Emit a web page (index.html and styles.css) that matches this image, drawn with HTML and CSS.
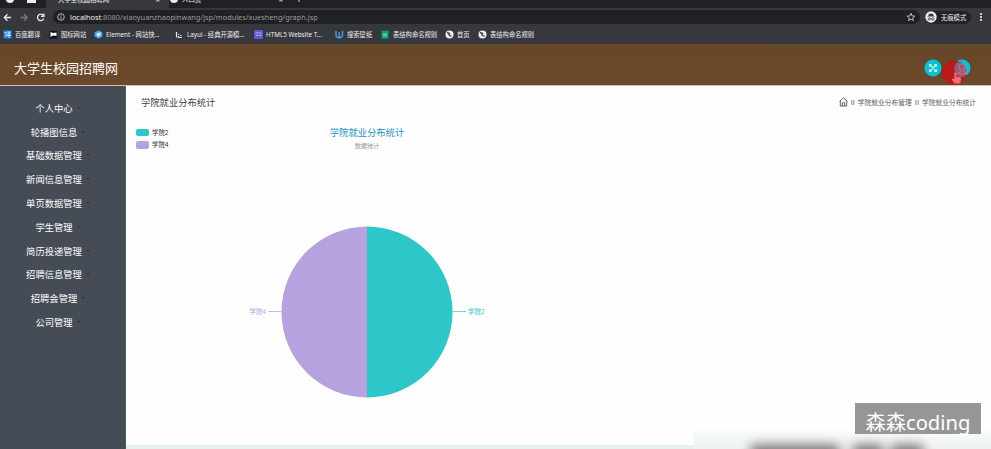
FILE: index.html
```html
<!DOCTYPE html>
<html lang="zh-CN">
<head>
<meta charset="utf-8">
<title>大学生校园招聘网</title>
<link rel="stylesheet" href="styles.css">
</head>
<body>
<div class="browser">
  <div class="tabs">
    <div class="pins"><i class="dot"></i><i class="card"></i></div>
    <div class="tab active"><span>大学生校园招聘网</span><b>×</b></div>
    <div class="tab"><i class="dot"></i><span>人口页</span><b>×</b></div>
    <div class="plus">+</div>
    <div class="win"><i>−</i><i>▫</i><i>×</i></div>
  </div>
  <div class="bar">
    <svg class="nav" viewBox="0 0 50 17" fill="none" stroke="#e8e8ea" stroke-width="1.3"><path d="M11 8.500H4.500M7.500 5.300L4.300 8.500L7.500 11.700"/><path stroke="#77787c" d="M20.500 8.500H27M24 5.300L27.200 8.500L24 11.700"/><path d="M43.300 6.500A3.200 3.200 0 1 0 43.700 9.500M43.900 4.500V7.300H41"/></svg>
    <div class="address">
      <svg class="info" viewBox="0 0 8 8" fill="none" stroke="#ddd" stroke-width=".8"><circle cx="4" cy="4" r="3.300"/><path d="M4 3.500V6M4 2V2.800"/></svg>
      <span class="url"><em>localhost</em>:8080/xiaoyuanzhaopinwang/jsp/modules/xuesheng/graph.jsp</span>
      <svg class="star" viewBox="0 0 10 10" fill="none" stroke="#ccc" stroke-width=".9"><path d="M5 1.300L6.100 3.900L8.800 4.100L6.700 5.900L7.400 8.600L5 7.100L2.600 8.600L3.300 5.900L1.200 4.100L3.900 3.900Z"/></svg>
    </div>
    <div class="private">
      <svg viewBox="0 0 12 12"><circle cx="6" cy="6" r="5.700" fill="#f1f1f2"/><path d="M4 2.800H8L8.700 5H3.300ZM2.300 5.400H9.700V6H2.300Z" fill="#333"/><g fill="none" stroke="#333" stroke-width=".8"><circle cx="4.200" cy="8" r="1.200"/><circle cx="7.800" cy="8" r="1.200"/><path d="M5.400 7.800H6.600"/></g></svg>
      <span>无痕模式</span>
    </div>
    <div class="more"><i></i><i></i><i></i></div>
  </div>
  <div class="bookmarks">
    <div><svg viewBox="0 0 9 9"><rect x=".5" y=".5" width="8" height="8" fill="#1687e8"/><path d="M1.500 2.500H3V7M4 2H7.500L4 4.500M5 3L7.500 4.500M4 5.500H8M6 4V8" fill="none" stroke="#fff" stroke-width=".7"/></svg><span>百度翻译</span></div>
    <div><svg viewBox="0 0 9 9"><rect x=".5" y="1" width="7.500" height="7.500" fill="#111"/><path d="M1.500 2L4 3L7.500 2.500V6L4 5.500L1.500 7Z" fill="#fff"/></svg><span>图标网站</span></div>
    <div><svg viewBox="0 0 9 9"><path d="M4.500 .3L8.400 2.500V6.500L4.500 8.700L.6 6.500V2.500Z" fill="#42aaf4"/><path d="M6.500 2.700L3 4V5L6.500 4M6.500 5L3 6.300" fill="none" stroke="#fff" stroke-width=".9"/></svg><span>Element - 网站快...</span></div>
    <div><svg viewBox="0 0 9 9" fill="none" stroke="#e8e8ea" stroke-width="1.200"><path d="M1.500 2V7.500M3.500 4V5M3.500 6V7.500H7M5 5.500H6.500"/></svg><span>Layui - 经典开源模...</span></div>
    <div><svg viewBox="0 0 9 9"><rect width="9" height="9" rx="1" fill="#5d59d5"/><path d="M1.500 3H7.500M2 5.500H4M5 5.500H7.500" stroke="#b7b5ff" fill="none"/></svg><span>HTML5 Website T...</span></div>
    <div><svg viewBox="0 0 9 9" fill="none" stroke-width="1.300"><path stroke="#4ba3e8" d="M1 1V6L2.500 7.500H6L7.500 6V1M4.200 2V7"/></svg><span>搜索壁纸</span></div>
    <div><svg viewBox="0 0 9 9"><rect x=".5" y=".8" width="7" height="8" rx=".5" fill="#05a66b"/><path d="M2 4H6M2 5.800H6" stroke="#8fe0bc"/></svg><span>表结构命名规则</span></div>
    <div><svg viewBox="0 0 9 9"><circle cx="4.500" cy="4.500" r="4" fill="#eee"/><path d="M2 2.500L4.500 3.500L4 5L6.500 6.500" fill="none" stroke="#414249" stroke-width="1.400"/></svg><span>首页</span></div>
    <div><svg viewBox="0 0 9 9"><circle cx="4.500" cy="4.500" r="4" fill="#eee"/><path d="M2 2.500L4.500 3.500L4 5L6.500 6.500" fill="none" stroke="#414249" stroke-width="1.400"/></svg><span>表结构命名规则</span></div>
  </div>
</div>
<header class="header">
  <h1>大学生校园招聘网</h1>
  <div class="actions">
    <svg class="round" viewBox="0 0 18 18"><circle cx="9" cy="9" r="8.500" fill="#05c2db"/><path d="M6 6L12 12M12 6L6 12M5.500 7.500V5.500H7.500M10.500 5.500H12.500V7.500M12.500 10.500V12.500H10.500M7.500 12.500H5.500V10.500" fill="none" stroke="#e7ffff" stroke-width="1.100"/></svg>
    <div class="user">
      <svg class="round" viewBox="0 0 18 18"><circle cx="9" cy="9" r="8.500" fill="#05c2db"/></svg>
      <svg class="pointer" viewBox="0 0 30 30"><circle cx="13" cy="13.500" r="12" fill="#b91917"/><path d="M17.700 2.500A8.500 8.500 0 0 0 17.700 17.500Q21 19 24.300 17A12 12 0 0 0 17.700 2.500Z" fill="#85607f"/><path d="M19.500 11C16.800 8 18 5 21 5S25.200 8 22.500 11M19.500 11V12L17 14.800H25.500L22.500 12V11" fill="none" stroke="#f85766" stroke-width="1.100"/><path d="M13.300 14Q14.200 12.700 15.200 14V17.500L19 18.200Q20.200 18.500 20 20L19.200 24.500H13.500L10.800 20.500Q10.600 18.800 13.300 20Z" fill="#ff6a6a"/></svg>
    </div>
  </div>
</header>
<div class="layout">
  <nav class="side">
    <a>个人中心</a><a>轮播图信息</a><a>基础数据管理</a><a>新闻信息管理</a><a>单页数据管理</a><a>学生管理</a><a>简历投递管理</a><a>招聘信息管理</a><a>招聘会管理</a><a>公司管理</a>
  </nav>
  <main class="main">
    <div class="heading">
      <h2>学院就业分布统计</h2>
      <div class="crumbs"><svg viewBox="0 0 9 10" fill="none" stroke="#555" stroke-width=".9"><path d="M.6 4.300L4.500 .8L8.400 4.300M1.300 3.800V9H7.700V3.800M3.300 9V5.700H5.700V9"/></svg><i>II</i><span>学院就业分布管理</span><i>II</i><span>学院就业分布统计</span></div>
    </div>
    <div class="chart">
      <div class="legend"><div><i class="teal"></i>学院2</div><div><i class="purple"></i>学院4</div></div>
      <div class="plot">
        <h3>学院就业分布统计</h3>
        <p>数据统计</p>
        <div class="pie-row">
          <span class="label-purple">学院4</span>
          <svg class="pie" viewBox="0 0 200 172"><path d="M100 .5A85.500 85.500 0 0 0 100 171.500Z" fill="#b6a2de"/><path d="M100 .5A85.500 85.500 0 0 1 100 171.500Z" fill="#2ec7c9"/><path d="M1 85.500H14.500" stroke="#cbbce8"/><path d="M185.500 85.500H199" stroke="#72d7d8"/></svg>
          <span class="label-teal">学院2</span>
        </div>
      </div>
    </div>
    <div class="foot"></div>
  </main>
</div>
<div class="haze"><i></i><i></i><i></i></div>
<div class="watermark">森森coding</div>
</body>
</html>
```
FILE: styles.css
```css
* { box-sizing: border-box; }
body { margin: 0; width: 991px; height: 449px; overflow: hidden; position: relative; background: #fff; font-family: "Noto Sans", "Noto Sans CJK SC", sans-serif; color: #444; }
i, em { font-style: normal; }
h1, h2, h3, p { margin: 0; font-weight: 400; }
svg { display: block; flex: none; }
.browser { height: 44px; background: #37383e; color: #eee; }
.tabs { height: 8px; background: #202124; display: flex; overflow: hidden; font-size: 6.4px; line-height: 8px; }
.pins { width: 46px; display: flex; gap: 13px; padding-left: 6px; }
.dot { width: 8px; height: 8px; margin-top: -5px; border-radius: 50%; background: #eee; flex: none; }
.card { width: 9px; height: 3px; background: #eee; }
.tab { width: 123px; display: flex; padding-left: 1px; }
.tab span { margin-top: -4px; }
.tab.active { background: #37383e; padding-left: 12px; }
.tab b { margin: -4px 9px 0 auto; font-weight: 400; font-size: 8px; }
.tab .dot { margin-right: 4px; }
.plus { font-size: 10px; margin: -5px 0 0 4px; }
.win { margin: -5px 4px 0 auto; display: flex; gap: 18px; }
.bar { height: 18px; display: flex; align-items: center; }
.nav { width: 50px; height: 17px; }
.address { width: 867px; height: 14px; margin-left: 3px; border-radius: 7px; background: #202125; display: flex; align-items: center; padding: 0 4px; }
.info { width: 8px; height: 8px; margin-right: 5px; }
.url { font-size: 7.37px; line-height: 12px; color: #999a9e; white-space: nowrap; }
.url em { color: #f3f3f4; }
.star { width: 10px; height: 10px; margin-left: auto; }
.private { width: 46px; height: 13px; margin-left: 5px; border-radius: 7px; background: #222327; display: flex; align-items: center; gap: 4px; font-size: 6.3px; white-space: nowrap; }
.private svg { width: 12px; height: 12px; }
.more { display: flex; flex-direction: column; gap: 1.5px; margin-left: 9px; }
.more i { width: 1.5px; height: 1.5px; background: #ccc; }
.bookmarks { height: 17px; display: grid; grid-template-columns: 46px 45px 81px 79px 81px 46px 64px 33px 60px; padding-left: 3px; font-size: 6.3px; align-items: center; line-height: 10px; }
.bookmarks div { display: flex; align-items: center; gap: 3px; white-space: nowrap; }
.bookmarks svg { width: 9px; height: 9px; }
.header { height: 41px; background: linear-gradient(#664728, #6d482a); display: flex; align-items: center; justify-content: space-between; padding: 7px 20px 0 14px; }
h1 { font-size: 13px; line-height: 20px; color: #fff; }
.actions { display: flex; gap: 11px; }
.round { width: 18px; height: 18px; }
.user { position: relative; }
.pointer { position: absolute; width: 30px; height: 30px; left: -12px; top: 0; }
.layout { display: flex; height: 364px; border-top: 1px solid #cbc4bd; }
.side { width: 126px; background: #464c56; border-right: 1px solid #4a5e55; padding-top: 10px; }
.side a { height: 23.8px; display: flex; justify-content: center; align-items: center; padding-right: 17px; font-size: 9.3px; color: #fff; }
.side a::after { content: ""; border: 2px solid transparent; border-top-color: #30363f; border-bottom: 0; margin-left: 4px; margin-right: -8px; }
.main { flex: 1; background: #fefefe; display: flex; flex-direction: column; }
.heading { height: 34px; display: flex; align-items: center; justify-content: space-between; padding: 0 15px 2px; }
h2 { font-size: 9.3px; color: #444; }
.crumbs { display: flex; align-items: center; font-size: 6.75px; color: #655d56; gap: 3px; white-space: nowrap; }
.crumbs svg { width: 9px; height: 10px; }
.crumbs i { font-family: "Liberation Sans", sans-serif; font-size: 7.5px; }
.chart { flex: 1; display: flex; padding-left: 10px; }
.legend { width: 60px; padding-top: 6px; font-size: 6.4px; color: #333; }
.legend div { display: flex; align-items: center; height: 12.5px; gap: 3px; }
.legend i { width: 13px; height: 7.5px; border-radius: 2px; }
.teal { background: #2ec7c9; }
.purple { background: #b6a2de; }
.plot { width: 342px; text-align: center; }
h3 { font-size: 9.3px; line-height: 14px; margin-top: 6px; color: #2593c4; }
.plot p { font-size: 6.2px; line-height: 9px; margin-top: 1px; color: #999; }
.pie-row { display: flex; align-items: center; justify-content: center; gap: 1px; margin-top: 76px; font-size: 6.4px; }
.pie-row span { margin-top: -2px; }
.pie { width: 200px; height: 172px; }
.label-purple { color: #b6a2de; }
.label-teal { color: #2ec7c9; }
.foot { height: 4px; width: 567px; background: #e6f1eb; }
.haze { position: absolute; left: 693px; top: 400px; width: 298px; height: 49px; overflow: hidden; background: linear-gradient(#fff0 55%, #edf2f0); }
.haze i { position: absolute; top: 45px; left: 58px; width: 88px; height: 15px; background: #776f70; filter: blur(6px); }
.haze i:nth-child(2) { left: 160px; width: 30px; }
.haze i:nth-child(3) { left: 198px; width: 32px; }
.watermark { position: absolute; left: 855px; top: 403px; width: 126px; height: 31px; background: #969696; color: #fff; font-size: 20.2px; line-height: 38px; text-align: center; white-space: nowrap; }
```
